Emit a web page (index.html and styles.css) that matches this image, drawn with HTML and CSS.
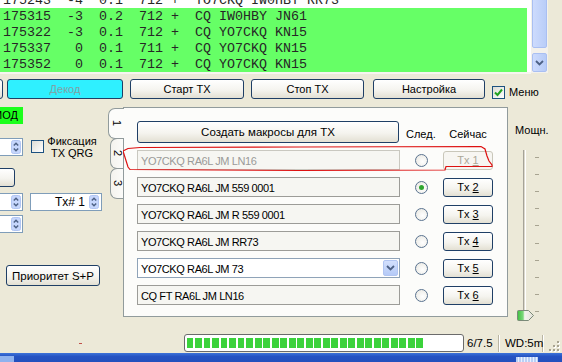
FILE: index.html
```html
<!DOCTYPE html>
<html lang="ru">
<head>
  <meta charset="UTF-8">
  <title>WSJT-X</title>
  <link rel="stylesheet" href="styles.css">
</head>
<body>
  <div class="window">
    <!-- decoded messages -->
    <div class="decode-box">
      <div class="decode-list">
        <div class="line">175243  -4  0.1  712 +  YO7CKQ IW0HBY RR73</div>
        <div class="line cq">175315  -3  0.2  712 +  CQ IW0HBY JN61</div>
        <div class="line cq">175322  -3  0.1  712 +  CQ YO7CKQ KN15</div>
        <div class="line cq">175337   0  0.1  711 +  CQ YO7CKQ KN15</div>
        <div class="line cq">175352   0  0.1  712 +  CQ YO7CKQ KN15</div>
      </div>
      <div class="vscroll">
        <div class="thumb"></div>
        <div class="scroll-btn">
          <svg width="9" height="6" viewBox="0 0 9 6"><path d="M1 1 L4.5 4.5 L8 1" fill="none" stroke="#4d6185" stroke-width="1.8"/></svg>
        </div>
      </div>
    </div>

    <div class="button-row">
      <button class="xp-btn b-cut"></button>
      <button class="xp-btn b-decode">Декод</button>
      <button class="xp-btn b-start">Старт TX</button>
      <button class="xp-btn b-stop">Стоп TX</button>
      <button class="xp-btn b-setup">Настройка</button>
      <label class="menu-check">
        <span class="xp-check">
          <svg width="11" height="11" viewBox="0 0 11 11"><path d="M2 5.5 L4.5 8 L9 2.5" fill="none" stroke="#21a121" stroke-width="2"/></svg>
        </span>
        Меню
      </label>
    </div>

    <div class="middle">
      <!-- left controls, cut off by the screenshot -->
      <div class="side">
        <div class="mode-tag">Авто МОД</div>
        <div class="side-row row-b">
          <div class="spin spin-cut">
            <span class="spin-arrows"><svg width="10" height="14" viewBox="0 0 10 14"><rect x="0.5" y="0.5" width="9" height="13" rx="2" fill="#c6d6fc" stroke="#b1c5f2"/><path d="M2.8 5.5 L5 3.3 L7.2 5.5 M2.8 8.5 L5 10.7 L7.2 8.5" fill="none" stroke="#4d6185" stroke-width="1.5"/></svg></span>
          </div>
          <span class="xp-check qrg-check"></span>
          <span class="qrg-label">Фиксация<br>TX QRG</span>
        </div>
        <div class="side-row row-c">
          <button class="xp-btn b-cut-small"></button>
        </div>
        <div class="side-row row-d">
          <div class="spin spin-cut">
            <span class="spin-arrows"><svg width="10" height="14" viewBox="0 0 10 14"><rect x="0.5" y="0.5" width="9" height="13" rx="2" fill="#c6d6fc" stroke="#b1c5f2"/><path d="M2.8 5.5 L5 3.3 L7.2 5.5 M2.8 8.5 L5 10.7 L7.2 8.5" fill="none" stroke="#4d6185" stroke-width="1.5"/></svg></span>
          </div>
          <div class="spin spin-tx">
            <span class="spin-value">Tx# 1</span>
            <span class="spin-arrows"><svg width="10" height="14" viewBox="0 0 10 14"><rect x="0.5" y="0.5" width="9" height="13" rx="2" fill="#c6d6fc" stroke="#b1c5f2"/><path d="M2.8 5.5 L5 3.3 L7.2 5.5 M2.8 8.5 L5 10.7 L7.2 8.5" fill="none" stroke="#4d6185" stroke-width="1.5"/></svg></span>
          </div>
        </div>
        <div class="side-row row-e">
          <div class="spin spin-cut">
            <span class="spin-arrows"><svg width="10" height="14" viewBox="0 0 10 14"><rect x="0.5" y="0.5" width="9" height="13" rx="2" fill="#c6d6fc" stroke="#b1c5f2"/><path d="M2.8 5.5 L5 3.3 L7.2 5.5 M2.8 8.5 L5 10.7 L7.2 8.5" fill="none" stroke="#4d6185" stroke-width="1.5"/></svg></span>
          </div>
        </div>
        <div class="side-row row-f">
          <button class="xp-btn b-prio">Приоритет S+P</button>
        </div>
      </div>

      <!-- macro tabs -->
      <div class="tabwidget">
        <div class="tabbar">
          <div class="tab selected"><span>1</span></div>
          <div class="tab"><span>2</span></div>
          <div class="tab"><span>3</span></div>
        </div>
        <div class="tabpane">
          <button class="xp-btn b-macro">Создать макросы для TX</button>
          <div class="col-label next">След.</div>
          <div class="col-label now">Сейчас</div>

          <div class="field disabled">YO7CKQ RA6L JM LN16</div>
          <span class="radio"></span>
          <button class="xp-btn tx disabled">Tx <u>1</u></button>

          <div class="field">YO7CKQ RA6L JM 559 0001</div>
          <span class="radio checked"></span>
          <button class="xp-btn tx">Tx <u>2</u></button>

          <div class="field">YO7CKQ RA6L JM R 559 0001</div>
          <span class="radio"></span>
          <button class="xp-btn tx">Tx <u>3</u></button>

          <div class="field">YO7CKQ RA6L JM RR73</div>
          <span class="radio"></span>
          <button class="xp-btn tx">Tx <u>4</u></button>

          <div class="field combo">YO7CKQ RA6L JM 73
            <span class="combo-btn"><svg width="9" height="6" viewBox="0 0 9 6"><path d="M1 1 L4.5 4.5 L8 1" fill="none" stroke="#4d6185" stroke-width="1.8"/></svg></span>
          </div>
          <span class="radio"></span>
          <button class="xp-btn tx">Tx <u>5</u></button>

          <div class="field">CQ FT RA6L JM LN16</div>
          <span class="radio"></span>
          <button class="xp-btn tx">Tx <u>6</u></button>
        </div>
      </div>

      <!-- power slider -->
      <div class="power">
        <div class="power-label">Мощн.</div>
        <div class="slider">
          <div class="track"></div>
          <div class="ticks">
            <i></i><i></i><i></i><i></i><i></i><i></i><i></i><i></i><i></i><i></i>
          </div>
          <svg class="slider-thumb" width="18" height="11" viewBox="0 0 18 11">
            <defs>
              <linearGradient id="thumbFill" x1="0" x2="1" y1="0" y2="0">
                <stop offset="0" stop-color="#3fbf3f"/>
                <stop offset="0.35" stop-color="#7cd87c"/>
                <stop offset="0.45" stop-color="#f4f4ee"/>
                <stop offset="1" stop-color="#e2e0d6"/>
              </linearGradient>
            </defs>
            <path d="M1.5 0.5 H11.5 L16.5 5.5 L11.5 10.5 H1.5 Q0.5 10.5 0.5 9.5 V1.5 Q0.5 0.5 1.5 0.5 Z" fill="url(#thumbFill)" stroke="#7a8a78"/>
          </svg>
        </div>
      </div>
    </div>

    <div class="statusbar">
      <span class="stray-mark"></span>
      <div class="progress"><div class="progress-fill"></div></div>
      <div class="stat-cell cell-period">6/7.5</div>
      <div class="stat-cell cell-wd">WD:5m</div>
      <div class="grip">
        <svg width="12" height="12" viewBox="0 0 12 12">
          <g fill="#fff"><rect x="10" y="2" width="2" height="2"/><rect x="6" y="6" width="2" height="2"/><rect x="10" y="6" width="2" height="2"/><rect x="2" y="10" width="2" height="2"/><rect x="6" y="10" width="2" height="2"/><rect x="10" y="10" width="2" height="2"/></g>
          <g fill="#a8a390"><rect x="9" y="1" width="2" height="2"/><rect x="5" y="5" width="2" height="2"/><rect x="9" y="5" width="2" height="2"/><rect x="1" y="9" width="2" height="2"/><rect x="5" y="9" width="2" height="2"/><rect x="9" y="9" width="2" height="2"/></g>
        </svg>
      </div>
    </div>

    <div class="taskbar">
      <span class="task-start"></span>
      <span class="task-tray"></span>
    </div>

    <!-- red marker drawn around the first macro line -->
    <svg class="marker" width="562" height="362" viewBox="0 0 562 362">
      <path d="M123 151 L128 148.5 L140 147.5 L300 147 L481 146.5 L485 149 L487 156 L489 161 L492 165 L492 166.5 L446 166.5 L445 170 L300 170.5 L130 169.5 L128 167 Z" fill="none" stroke="#dd1111" stroke-width="1.2"/>
    </svg>
  </div>
</body>
</html>
```

FILE: styles.css
```css
* {
  box-sizing: border-box;
}
body {
  margin: 0;
  background: #ece9d8;
  font-family: "Liberation Sans", Arial, sans-serif;
  font-size: 11px;
  color: #000;
}
.window {
  position: relative;
  width: 562px;
  height: 362px;
  overflow: hidden;
  display: flex;
  flex-direction: column;
}

/* decoded messages */
.decode-box {
  display: flex;
  height: 74px;
  flex: none;
}
.decode-list {
  width: 531px;
  height: 74px;
  background: #fff;
  border-bottom: 2px solid #f6f5f0;
  overflow: hidden;
  font-family: "Liberation Mono", "Courier New", monospace;
  font-size: 13.33px;
}
.line {
  width: 527px;
  height: 16px;
  padding: 1px 0 0 3px;
  line-height: 15px;
  white-space: pre;
  color: #262626;
}
.line:first-child {
  margin-top: -8px;
}
.line.cq {
  background: #66ff66;
}
.vscroll {
  width: 17px;
  height: 73px;
  padding: 0 1px;
  background: #f3f1ec;
  display: flex;
  flex-direction: column;
  justify-content: space-between;
}
.thumb {
  height: 52px;
  margin-top: -4px;
  background: linear-gradient(90deg, #cddbfd, #b9cdf8);
  border: 1px solid #a9bff2;
  border-radius: 2px;
}
.scroll-btn {
  height: 19px;
  margin-bottom: 1px;
  background: linear-gradient(90deg, #cddbfd, #b6cbf7);
  border: 1px solid #a9bff2;
  border-radius: 2px;
  display: flex;
  align-items: center;
  justify-content: center;
}

/* XP buttons */
.xp-btn {
  height: 20px;
  padding: 0;
  border: 1px solid #1f3f66;
  border-radius: 3px;
  background: linear-gradient(#ffffff, #f5f4ef 55%, #e3e0d3);
  font-family: inherit;
  font-size: 11px;
  color: #000;
  flex: none;
}
.button-row {
  display: flex;
  height: 20px;
  margin-top: 5px;
  flex: none;
}
.b-cut {
  width: 114px;
  margin-left: -111px;
}
.b-decode {
  width: 116px;
  margin-left: 4px;
  background: #2ff0ff;
  color: #7fa2a6;
}
.b-start {
  width: 114px;
  margin-left: 7px;
}
.b-stop {
  width: 113px;
  margin-left: 7px;
}
.b-setup {
  width: 112px;
  margin-left: 9px;
}
.menu-check {
  display: flex;
  align-items: center;
  gap: 4px;
  margin-left: 7px;
  align-self: flex-end;
  height: 14px;
}
.xp-check {
  width: 13px;
  height: 13px;
  border: 1px solid #1c5180;
  background: linear-gradient(135deg, #dcdcd5, #ffffff);
  display: flex;
  align-items: center;
  justify-content: center;
  flex: none;
}

/* middle area */
.middle {
  display: flex;
  height: 210px;
  margin-top: 8px;
  flex: none;
}
.side {
  width: 108px;
  flex: none;
  display: flex;
  flex-direction: column;
}
.mode-tag {
  width: 60px;
  height: 17px;
  margin-left: -37px;
  padding-right: 5px;
  background: #1cff1c;
  text-align: right;
  line-height: 17px;
  white-space: nowrap;
}
.side-row {
  display: flex;
  align-items: center;
}
.row-b {
  height: 21px;
  margin-top: 12px;
}
.row-c {
  height: 19px;
  margin-top: 11px;
}
.row-d {
  height: 18px;
  margin-top: 6px;
}
.row-e {
  height: 18px;
  margin-top: 4px;
}
.row-f {
  height: 21px;
  margin-top: 32px;
}
.spin {
  height: 18px;
  border: 1px solid #7f9db9;
  background: #fff;
  display: flex;
  align-items: center;
  justify-content: flex-end;
  padding-right: 1px;
  flex: none;
}
.spin-arrows {
  display: flex;
}
.spin-cut {
  width: 60px;
  margin-left: -37px;
}
.spin-tx {
  width: 72px;
  margin-left: 7px;
  padding-right: 2px;
}
.spin-value {
  margin-right: 4px;
  font-size: 12px;
}
.qrg-check {
  margin-left: 8px;
}
.qrg-label {
  width: 54px;
  margin-left: 1px;
  text-align: center;
  line-height: 12px;
}
.b-cut-small {
  width: 60px;
  margin-left: -45px;
  height: 19px;
}
.b-prio {
  width: 94px;
  height: 21px;
  margin-left: 6px;
  font-size: 11.5px;
}

/* tab widget */
.tabwidget {
  display: flex;
  width: 400px;
  flex: none;
}
.tabbar {
  width: 15px;
  display: flex;
  flex-direction: column;
  position: relative;
  z-index: 1;
  padding-top: 1px;
}
.tab {
  height: 31px;
  margin-left: 2px;
  margin-bottom: -1px;
  border: 1px solid #919b9c;
  border-right: none;
  border-radius: 7px 0 0 7px;
  background: linear-gradient(90deg, #f4f3ee, #fbfbf9);
  display: flex;
  align-items: center;
  justify-content: center;
}
.tab.selected {
  margin-left: 0;
  margin-right: -1px;
  background: #fcfcfa;
}
.tab span {
  writing-mode: vertical-rl;
  font-size: 11px;
  line-height: 11px;
}
.tabpane {
  width: 385px;
  height: 210px;
  border: 1px solid #919b9c;
  background: #fcfcfa;
  padding: 13px 0 0 13px;
  display: grid;
  grid-template-columns: 263px 43px 50px;
  grid-template-rows: 22px repeat(6, 20px);
  row-gap: 7px;
  align-items: center;
}
.b-macro {
  width: 262px;
  height: 22px;
  font-size: 11.5px;
}
.col-label {
  font-size: 11px;
}
.col-label.next {
  padding-left: 6px;
  margin-top: 3px;
}
.col-label.now {
  text-align: center;
  margin-top: 3px;
}
.field {
  height: 20px;
  border: 1px solid #9c9c98;
  background: #f6f6f2;
  padding: 2px 0 0 3px;
  font-size: 11px;
  letter-spacing: -0.4px;
  line-height: 16px;
  white-space: nowrap;
  position: relative;
}
.field.disabled {
  border-color: #c9c8c0;
  color: #9a9a98;
}
.field.combo {
  background: #fff;
  border-color: #8fa3b8;
}
.combo-btn {
  position: absolute;
  right: 1px;
  top: 1px;
  width: 15px;
  height: 16px;
  background: linear-gradient(#d3e0fd, #b5caf7);
  border: 1px solid #b1c5f2;
  border-radius: 2px;
  display: flex;
  align-items: center;
  justify-content: center;
}
.radio {
  justify-self: center;
  width: 13px;
  height: 13px;
  border: 1px solid #5a7390;
  border-radius: 50%;
  background: radial-gradient(circle at 60% 60%, #ffffff, #e7e6df);
  display: flex;
  align-items: center;
  justify-content: center;
}
.radio.checked::after {
  content: "";
  width: 5px;
  height: 5px;
  border-radius: 50%;
  background: #2fa62f;
}
.tx {
  width: 50px;
  height: 19px;
  font-size: 11px;
}
.tx.disabled {
  border-color: #c9c7ba;
  color: #aca899;
  background: #f7f6f2;
}

/* power slider */
.power {
  flex: 1;
  padding-left: 7px;
  display: flex;
  flex-direction: column;
}
.power-label {
  margin-top: 17px;
  line-height: 13px;
  font-size: 11px;
}
.slider {
  position: relative;
  display: flex;
  height: 172px;
  margin-top: 13px;
}
.track {
  width: 3px;
  margin-left: 8px;
  border-left: 1px solid #a6a398;
  border-right: 1px solid #fff;
  background: #dcd9cc;
}
.ticks {
  width: 4px;
  margin-left: 9px;
  padding: 7px 0 5px;
  display: flex;
  flex-direction: column;
  justify-content: space-between;
}
.ticks i {
  height: 1px;
  background: #a8a491;
}
.slider-thumb {
  position: absolute;
  left: 2px;
  top: 160px;
}

/* status bar */
.statusbar {
  display: flex;
  align-items: center;
  height: 20px;
  margin-top: 16px;
  flex: none;
}
.stray-mark {
  width: 3px;
  height: 1px;
  margin: 0 auto 0 79px;
  background: #c0504a;
}
.progress {
  width: 280px;
  height: 18px;
  border: 1px solid #6b6b6b;
  border-radius: 3px;
  background: #fff;
  padding: 3px 2px;
}
.progress-fill {
  width: 238px;
  height: 10px;
  background: repeating-linear-gradient(90deg, #3bd23b 0 6.5px, transparent 6.5px 8.5px);
}
.stat-cell {
  height: 17px;
  line-height: 17px;
  font-size: 11.5px;
  border-right: 1px solid #b9b5a3;
  box-shadow: 1px 0 0 #fff;
}
.cell-period {
  width: 35px;
  padding-left: 3px;
}
.cell-wd {
  width: 43px;
  padding-left: 5px;
  margin-left: 1px;
}
.grip {
  width: 19px;
  height: 17px;
  display: flex;
  align-items: flex-end;
  justify-content: flex-end;
  padding-right: 2px;
}

/* bottom edge of the desktop */
.taskbar {
  flex: 1;
  background: linear-gradient(#3d73d9, #2552c2 40%, #2350bd);
  display: flex;
  align-items: flex-end;
}
.task-start {
  width: 14px;
  height: 6px;
  background: #8fb2ee;
}
.task-tray {
  width: 22px;
  height: 5px;
  margin-left: 502px;
  background: repeating-linear-gradient(90deg, #b9cff5 0 2px, #e8f0ff 2px 3px);
}

.marker {
  position: absolute;
  left: 0;
  top: 0;
  pointer-events: none;
}
```
